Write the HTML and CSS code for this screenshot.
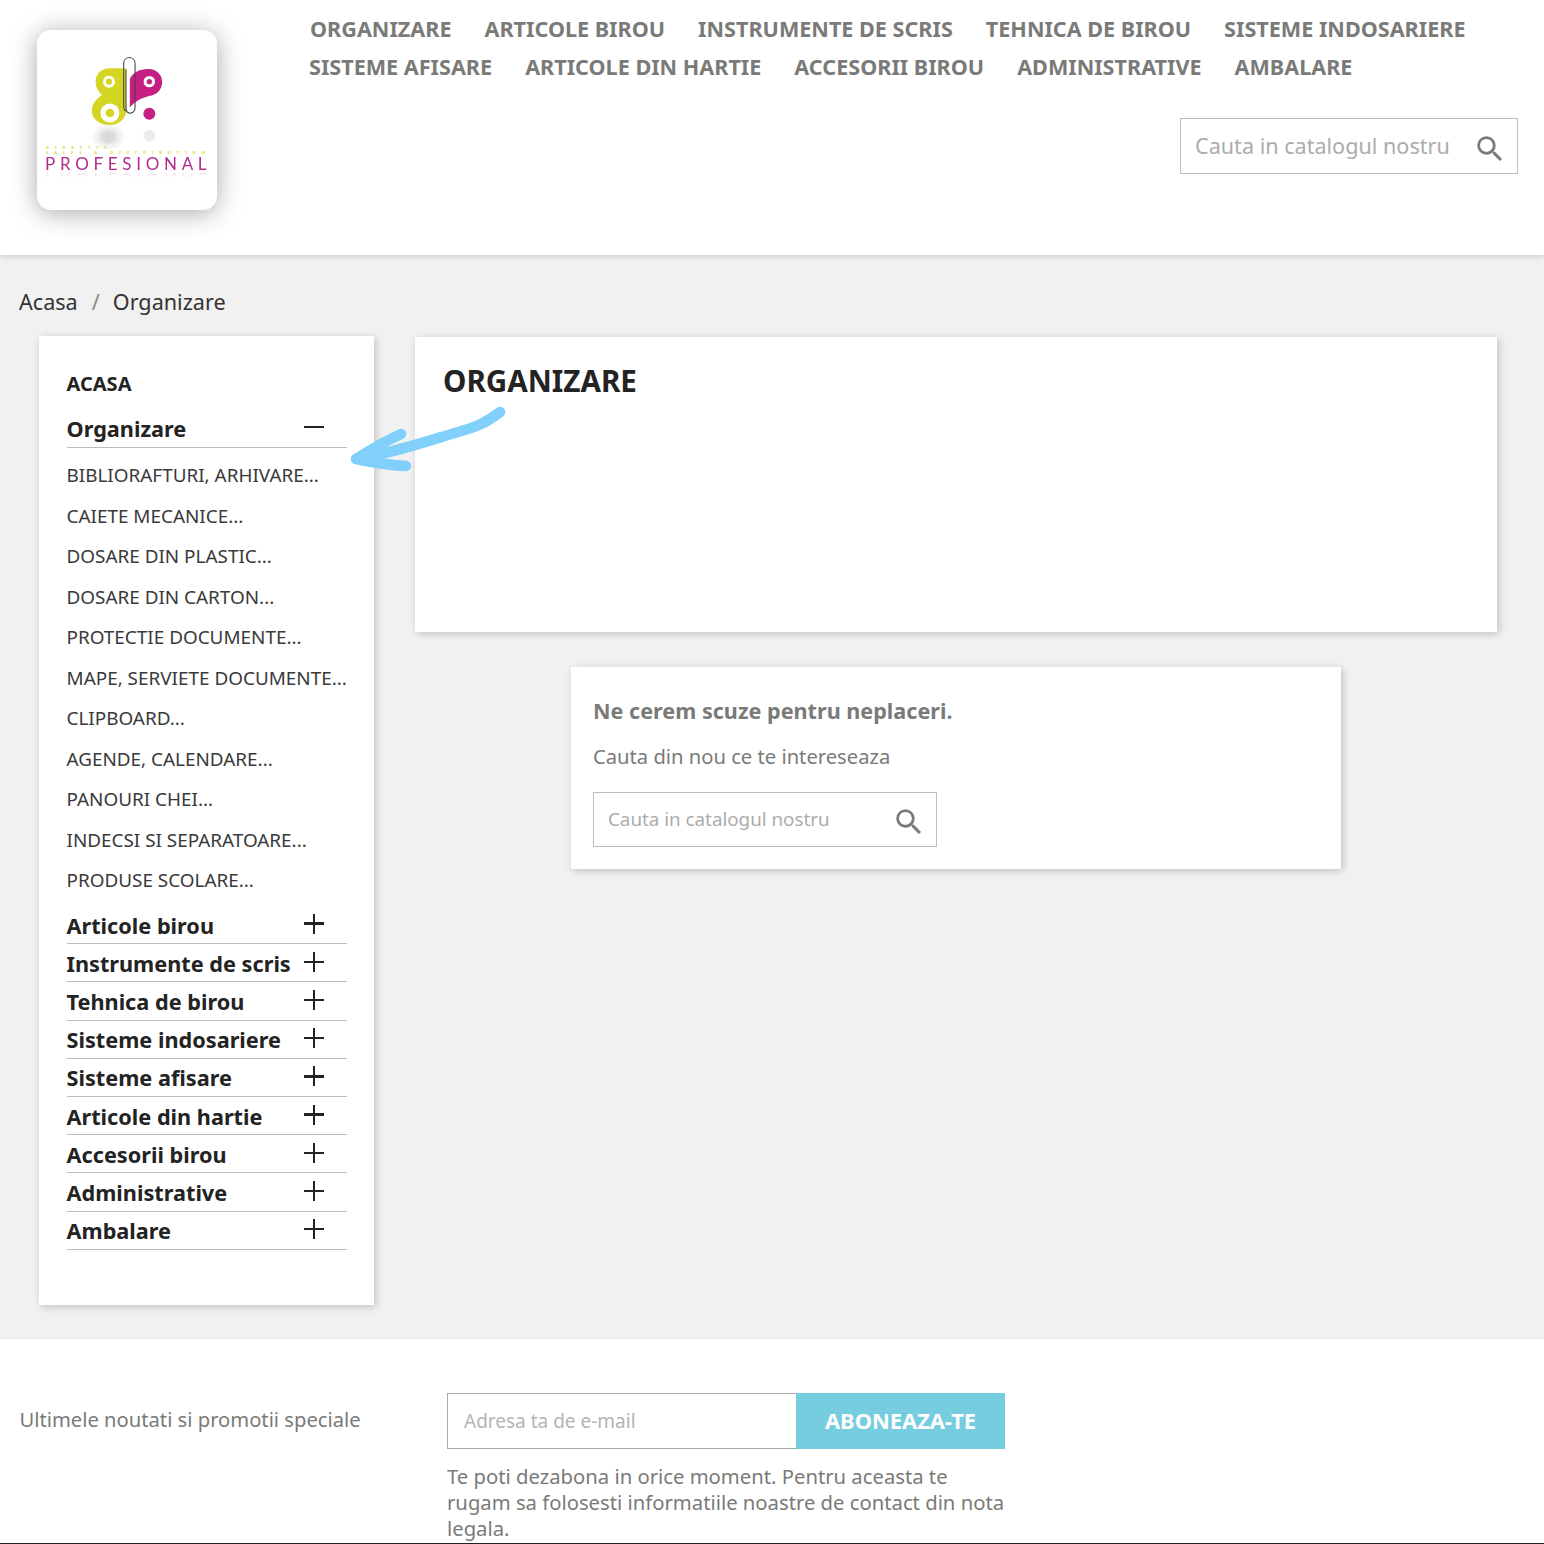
FILE: index.html
```html
<!DOCTYPE html>
<html lang="ro">
<head>
<meta charset="utf-8">
<title>Organizare</title>
<link rel="stylesheet" href="styles.css">
</head>
<body>
<div class="page">
<header class="header">
  <a class="logo">
    <svg class="logo-mark" viewBox="0 0 80 100" aria-hidden="true">
      <defs><radialGradient id="gl"><stop offset="0" stop-color="#d8d8d8"/><stop offset=".45" stop-color="#dedede"/><stop offset=".55" stop-color="#ececec"/><stop offset="1" stop-color="#fbfbfb"/></radialGradient></defs>
      <ellipse cx="20.4" cy="85" rx="17" ry="14" fill="url(#gl)"/>
      <circle cx="63.5" cy="84" r="6.3" fill="#ececec"/>
      <path d="M37 13H22C13 13 7 19 7 27C7 33 10 38 14 41C7 45 3 51 3 58C3 67 12 72.6 22 72.6C30 72.6 37 68 39 60V13Z" fill="#d5d523"/>
      <circle cx="21" cy="27" r="6.3" fill="#fff"/><circle cx="21" cy="27" r="3.2" fill="#d5d523"/>
      <circle cx="22" cy="60" r="10" fill="#fff"/><circle cx="22" cy="60" r="4.6" fill="#d5d523"/>
      <path d="M43 24C46 18 52 13.7 63 13.7C71 13.7 77 20 77 27C77 35 72 40 66 41.5C58 43 50 46 43 54Z" fill="#c51f84"/>
      <circle cx="63.5" cy="27" r="6" fill="#fff"/><circle cx="63.5" cy="27" r="2.8" fill="#c51f84"/>
      <circle cx="63.5" cy="60.7" r="6.3" fill="#c51f84"/>
      <path d="M40 58C37 58 36.5 55 36.5 52V8C36.5 -.5 48.5 -.5 48.5 8V54C48.5 61 39 63 39 55V14" fill="none" stroke="#444" stroke-width="1.1"/>
    </svg>
    <span class="logo-small">DIDACTIC</span>
    <span class="logo-small logo-small-wide">SALES &amp; DISTRIBUTION</span>
    <span class="logo-name">PROFESIONAL</span>
  </a>
  <div class="header-right">
    <nav class="topnav">
      <a>ORGANIZARE</a><a>ARTICOLE BIROU</a><a>INSTRUMENTE DE SCRIS</a><a>TEHNICA DE BIROU</a><a>SISTEME INDOSARIERE</a>
      <a>SISTEME AFISARE</a><a>ARTICOLE DIN HARTIE</a><a>ACCESORII BIROU</a><a>ADMINISTRATIVE</a><a>AMBALARE</a>
    </nav>
    <div class="search search-top">
      <span class="placeholder">Cauta in catalogul nostru</span>
      <svg class="search-icon" viewBox="0 0 24 24" aria-hidden="true"><path d="M15.5 14h-.79l-.28-.27A6.47 6.47 0 0 0 16 9.5 6.5 6.5 0 1 0 9.5 16c1.61 0 3.09-.59 4.23-1.57l.27.28v.79l5 4.99L20.49 19l-4.99-5zm-6 0C7.01 14 5 11.99 5 9.5S7.01 5 9.5 5 14 7.01 14 9.5 11.99 14 9.5 14z"/></svg>
    </div>
  </div>
</header>

<main class="content">
  <div class="breadcrumb"><span>Acasa</span><span class="sep">/</span><span>Organizare</span></div>
  <div class="columns">
    <aside class="sidebar">
      <div class="side-home">ACASA</div>
      <div class="cat cat-open"><span>Organizare</span><i class="toggle minus"></i></div>
      <ul class="subcats">
        <li>BIBLIORAFTURI, ARHIVARE...</li>
        <li>CAIETE MECANICE...</li>
        <li>DOSARE DIN PLASTIC...</li>
        <li>DOSARE DIN CARTON...</li>
        <li>PROTECTIE DOCUMENTE...</li>
        <li>MAPE, SERVIETE DOCUMENTE...</li>
        <li>CLIPBOARD...</li>
        <li>AGENDE, CALENDARE...</li>
        <li>PANOURI CHEI...</li>
        <li>INDECSI SI SEPARATOARE...</li>
        <li>PRODUSE SCOLARE...</li>
      </ul>
      <div class="cat"><span>Articole birou</span><i class="toggle plus"></i></div>
      <div class="cat"><span>Instrumente de scris</span><i class="toggle plus"></i></div>
      <div class="cat"><span>Tehnica de birou</span><i class="toggle plus"></i></div>
      <div class="cat"><span>Sisteme indosariere</span><i class="toggle plus"></i></div>
      <div class="cat"><span>Sisteme afisare</span><i class="toggle plus"></i></div>
      <div class="cat"><span>Articole din hartie</span><i class="toggle plus"></i></div>
      <div class="cat"><span>Accesorii birou</span><i class="toggle plus"></i></div>
      <div class="cat"><span>Administrative</span><i class="toggle plus"></i></div>
      <div class="cat"><span>Ambalare</span><i class="toggle plus"></i></div>
    </aside>
    <section class="main">
      <div class="title-card"><h1>ORGANIZARE</h1></div>
      <div class="notfound">
        <h4>Ne cerem scuze pentru neplaceri.</h4>
        <p>Cauta din nou ce te intereseaza</p>
        <div class="search search-inner">
          <span class="placeholder">Cauta in catalogul nostru</span>
          <svg class="search-icon" viewBox="0 0 24 24" aria-hidden="true"><path d="M15.5 14h-.79l-.28-.27A6.47 6.47 0 0 0 16 9.5 6.5 6.5 0 1 0 9.5 16c1.61 0 3.09-.59 4.23-1.57l.27.28v.79l5 4.99L20.49 19l-4.99-5zm-6 0C7.01 14 5 11.99 5 9.5S7.01 5 9.5 5 14 7.01 14 9.5 11.99 14 9.5 14z"/></svg>
        </div>
      </div>
    </section>
  </div>
  <svg class="arrow" viewBox="0 0 170 80" aria-hidden="true"><path d="M150 5C136 16 126 20 108 25C84 32 44 46 6 52M51 27C38 33 20 43 6 52C20 55 38 58 56 59" fill="none" stroke="#80d0fb" stroke-width="10.5" stroke-linecap="round" stroke-linejoin="round"/></svg>
</main>

<footer class="footer">
  <p class="news-label">Ultimele noutati si promotii speciale</p>
  <div class="news-form">
    <div class="news-row">
      <div class="email">Adresa ta de e-mail</div>
      <div class="subscribe">ABONEAZA-TE</div>
    </div>
    <p class="news-note">Te poti dezabona in orice moment. Pentru aceasta te rugam sa folosesti informatiile noastre de contact din nota legala.</p>
  </div>
</footer>
</div>
</body>
</html>
```
FILE: styles.css
```css
* { box-sizing: border-box; }
html, body { margin: 0; padding: 0; }
body { font-family: "Noto Sans", "Open Sans", sans-serif; background: #fff; color: #232323; }
.page { position: relative; width: 1544px; height: 1544px; overflow: hidden; border-bottom: 1px solid #222; display: flex; flex-direction: column; }

.header { height: 255px; flex: none; background: #fff; display: flex; box-shadow: 0 2px 5px rgba(0,0,0,.14); position: relative; z-index: 2; padding: 30px 26px 0 37px; }
.logo { position: relative; width: 180px; height: 180px; flex: none; background: #fff; border-radius: 14px; box-shadow: 0 3px 26px rgba(0,0,0,.34); display: flex; flex-direction: column; align-items: center; }
.logo-mark { position: absolute; left: 52px; top: 26px; width: 76px; height: 95px; }
.logo-small { position: absolute; left: 9px; top: 115px; font-size: 4px; font-weight: 700; line-height: 5px; letter-spacing: 5.95px; color: #e0d92a; white-space: nowrap; }
.logo-small-wide { top: 120px; }
.logo-name { position: absolute; left: 8px; top: 123px; font-family: "Lato", sans-serif; font-size: 17px; line-height: 22px; letter-spacing: 4.7px; color: #b42a8d; white-space: nowrap; -webkit-box-reflect: below -7px linear-gradient(transparent 55%, rgba(255,255,255,.35)); }

.header-right { margin-left: 93px; flex: 1; display: flex; flex-direction: column; }
.topnav { margin-top: -20px; display: flex; flex-wrap: wrap; column-gap: 33px; font-size: 21.6px; line-height: 38px; font-weight: 700; color: #7a7a78; width: 1190px; }
.topnav a { white-space: nowrap; }
.topnav a:nth-child(6) { margin-left: -1px; }

.search { display: flex; align-items: center; justify-content: space-between; border: 1px solid #bdbdbd; background: #fff; }
.placeholder { color: #acacac; white-space: nowrap; }
.search-icon { fill: #7a7a78; flex: none; }
.search-top { align-self: flex-end; width: 338px; height: 56px; margin-top: 32px; padding: 0 10px 0 14px; font-size: 21.6px; }
.search-top .placeholder { margin-top: -2px; }
.search-top .search-icon { width: 34px; height: 34px; margin-top: 5px; }
.search-inner { width: 344px; height: 55px; margin-top: 20px; padding: 0 10px 0 14px; font-size: 18.8px; }
.search-inner .placeholder { margin-top: -2px; }
.search-inner .search-icon { width: 34px; height: 34px; margin-top: 5px; }

.content { position: relative; flex: 1; background: #f1f1f1; padding: 0 47px 0 19px; border-bottom: 1px solid #e8e8e8; }
.breadcrumb { height: 81px; padding-top: 29px; font-size: 21.6px; line-height: 36px; color: #333; display: flex; }
.sep { margin: 0 13px 0 14px; color: #888; }
.columns { display: flex; padding-left: 20px; gap: 41px; align-items: flex-start; }

.sidebar { width: 335px; height: 969px; flex: none; background: #fff; box-shadow: 2px 2px 8px rgba(0,0,0,.2); padding: 34px 27px 0 27.5px; }
.side-home { font-size: 20px; font-weight: 700; line-height: 28px; color: #232323; margin-bottom: 13px; }
.cat { display: flex; justify-content: space-between; align-items: center; height: 38.2px; border-bottom: 1px solid #bdbdbd; font-size: 21.7px; font-weight: 700; color: #232323; padding-right: 23px; line-height: 30px; }
.cat span { position: relative; top: 1px; white-space: nowrap; }
.cat-open { height: 37px; }
.cat-open span { top: 0; }
.subcats { list-style: none; margin: 0; padding: 7px 0 0; height: 458px; }
.subcats li { height: 40.5px; font-size: 18.9px; line-height: 40.5px; color: #3a3a3a; white-space: nowrap; }
.toggle { position: relative; display: block; width: 20px; height: 20px; flex: none; top: -1px; }
.cat-open .toggle { top: -2px; }
.toggle::before { content: ""; position: absolute; left: 0; right: 0; top: 8.8px; height: 2.4px; background: #232323; }
.plus::after { content: ""; position: absolute; top: 0; bottom: 0; left: 8.8px; width: 2.4px; background: #232323; }

.main { width: 1082px; flex: none; padding-top: 1px; display: flex; flex-direction: column; align-items: center; }
.title-card { width: 100%; height: 295px; background: #fff; box-shadow: 2px 2px 8px rgba(0,0,0,.2); padding: 22px 28px; }
h1 { margin: 0; font-size: 29.6px; line-height: 44px; font-weight: 700; color: #232323; }
.notfound { width: 770px; height: 202px; margin-top: 35px; background: #fff; box-shadow: 2px 2px 8px rgba(0,0,0,.2); padding: 27px 22px; color: #7a7a78; }
h4 { margin: 0; font-size: 21.6px; line-height: 34px; font-weight: 700; }
.notfound p { margin: 12px 0 0; font-size: 20.2px; line-height: 32px; }

.arrow { position: absolute; left: 350px; top: 152px; width: 170px; height: 80px; }

.footer { height: 204px; flex: none; background: #fff; padding: 54px 0 0 19.5px; display: flex; }
.news-label { margin: -1px 0 0; width: 427.5px; font-size: 20.2px; line-height: 54px; color: #7a7a78; }
.news-form { width: 558px; }
.news-row { display: flex; height: 56px; }
.email { width: 349px; border: 1px solid #a8a8a8; border-right: 0; padding-left: 16px; font-size: 19px; line-height: 54px; color: #b4b4b4; }
.subscribe { width: 209px; background: #77cde0; color: #fff; font-size: 21.9px; font-weight: 700; line-height: 56px; text-align: center; }
.news-note { margin: 14px 0 0; font-size: 20.25px; line-height: 26px; color: #7a7a78; }
```
